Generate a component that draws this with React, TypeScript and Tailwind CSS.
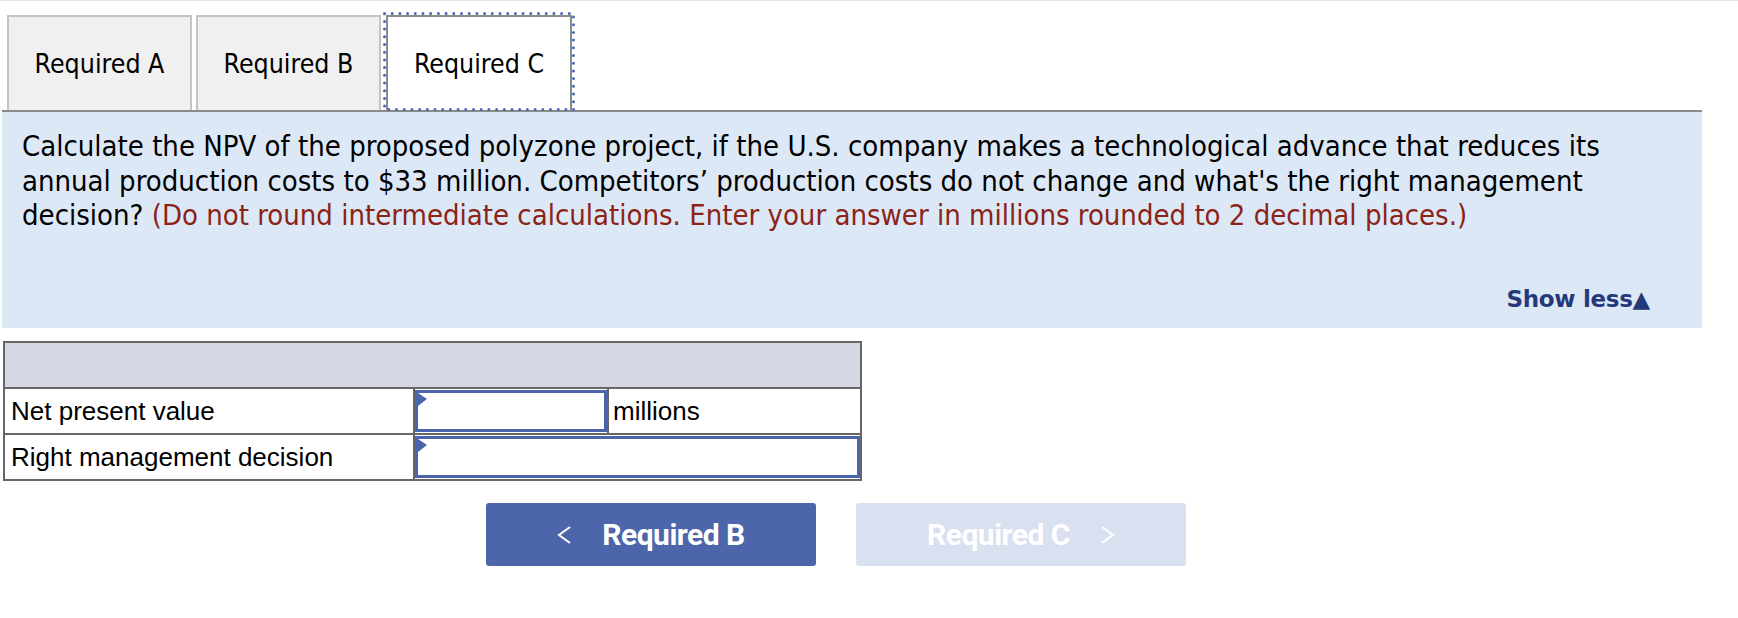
import React from "react";

const tahoma = { fontFamily: '"DejaVu Sans Condensed", "DejaVu Sans", sans-serif' };

function Tab({ label, active }: { label: string; active?: boolean }) {
  if (active) {
    return (
      <div className="relative ml-[1px] h-[95px] w-[186px]">
        {/* focus ring: sparse round dots */}
        <svg className="pointer-events-none absolute -left-[3px] -top-[3px]" width="192" height="99">
          <rect
            x="1.5"
            y="1.5"
            width="189"
            height="96"
            fill="none"
            stroke="#4a68b5"
            strokeWidth="3"
            strokeLinecap="round"
            strokeDasharray="0 7.7"
          />
        </svg>
        <div className="flex h-full items-center justify-center border-2 border-b-0 border-[#8a8a8a] bg-white text-[26.5px] text-black">
          {label}
        </div>
      </div>
    );
  }
  return (
    <div className="flex h-[95px] w-[185px] items-center justify-center border-2 border-b-0 border-[#c4c4c4] bg-[#f0f0f0] text-[26.5px] text-black">
      {label}
    </div>
  );
}

function Flag() {
  return (
    <svg className="absolute left-0 top-0" width="9" height="14" viewBox="0 0 9 14">
      <polygon points="0,0 9,6 0,13" fill="#4a65ab" />
    </svg>
  );
}

function Chevron({ dir }: { dir: "left" | "right" }) {
  return (
    <svg width="15" height="18" viewBox="0 0 15 18">
      <polyline
        points={dir === "left" ? "13,1 2,9 13,17" : "2,1 13,9 2,17"}
        fill="none"
        stroke="white"
        strokeWidth="2"
      />
    </svg>
  );
}

export default function App() {
  return (
    <div className="min-h-[618px] w-[1738px] bg-white">
      <div className="h-px w-full bg-[#e2e2e2]" />
      <div className="w-[1702px] pl-[2px]" style={tahoma}>
        <div className="flex items-end gap-[4px] pl-[5px] pt-[14px]">
          <Tab label="Required A" />
          <Tab label="Required B" />
          <Tab label="Required C" active />
        </div>
        <div className="h-[2px] w-full bg-[#8a8a8a]" />
        <div className="flex h-[216px] flex-col bg-[#dde8f6] pl-[20px] pr-[52px] pt-[17px]">
          <p className="whitespace-nowrap text-[29px] leading-[34.5px] text-black">
            Calculate the NPV of the proposed polyzone project, if the U.S. company makes a technological advance that reduces its
            <br />
            annual production costs to $33 million. Competitors’ production costs do not change and what's the right management
            <br />
            decision?{" "}
            <span className="text-[#8b2316]">
              (Do not round intermediate calculations. Enter your answer in millions rounded to 2 decimal places.)
            </span>
          </p>
          <div className="mt-auto mb-[12px] flex justify-end">
            <span
              className="text-[23px] font-bold tracking-[-0.3px] text-[#24397a]"
              style={{ fontFamily: '"DejaVu Sans", sans-serif' }}
            >
              Show less▲
            </span>
          </div>
        </div>
      </div>

      <div className="ml-[3px] mt-[13px] w-[859px] text-[26px] text-black" style={{ fontFamily: '"Liberation Sans", Arial, sans-serif' }}>
        <table className="w-full border-collapse">
          <tbody>
            <tr>
              <td colSpan={3} className="h-[46px] border-2 border-[#666] bg-[#d5d8e3]" />
            </tr>
            <tr className="h-[46px]">
              <td className="w-[410px] border-2 border-[#666] px-[6px] leading-none">Net present value</td>
              <td className="w-[194px] border-2 border-[#666] p-0">
                <div className="relative h-[42px] border-[3px] border-[#4a65ab] bg-white">
                  <Flag />
                </div>
              </td>
              <td className="border-2 border-[#666] px-[4px] leading-none">millions</td>
            </tr>
            <tr className="h-[46px]">
              <td className="border-2 border-[#666] px-[6px] leading-none">Right management decision</td>
              <td colSpan={2} className="border-2 border-[#666] p-0">
                <div className="relative h-[42px] border-[3px] border-[#4a65ab] bg-white">
                  <Flag />
                </div>
              </td>
            </tr>
          </tbody>
        </table>
      </div>

      <div className="ml-[486px] mt-[22px] flex gap-[40px]" style={{ fontFamily: 'Roboto, "Liberation Sans", sans-serif' }}>
        <button className="flex h-[63px] w-[330px] items-center justify-center gap-[30px] rounded-[3px] bg-[#4d66ab] text-[30px] font-bold text-white">
          <Chevron dir="left" />
          <span className="tracking-[-0.5px]">Required B</span>
        </button>
        <button className="flex h-[63px] w-[330px] items-center justify-center gap-[30px] rounded-[3px] bg-[#d9e0ef] text-[30px] font-bold text-white">
          <span className="tracking-[-0.5px]">Required C</span>
          <Chevron dir="right" />
        </button>
      </div>
    </div>
  );
}
